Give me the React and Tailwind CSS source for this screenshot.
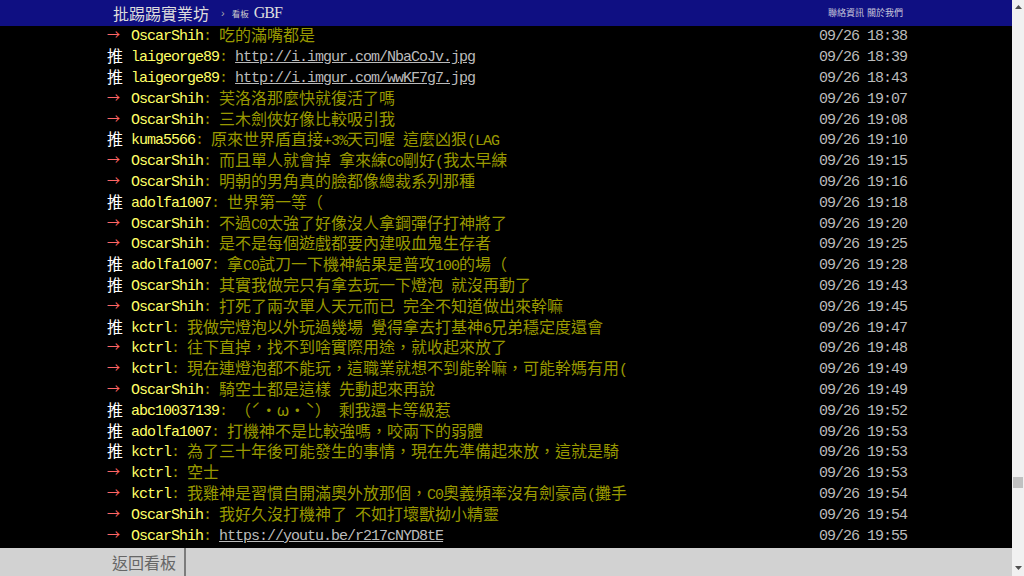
import React from 'react';

const pushes = [
    ['→', 'OscarShih', '吃的滿嘴都是', '09/26 18:38'],
    ['推', 'laigeorge89', 'http://i.imgur.com/NbaCoJv.jpg', '09/26 18:39'],
    ['推', 'laigeorge89', 'http://i.imgur.com/wwKF7g7.jpg', '09/26 18:43'],
    ['→', 'OscarShih', '芙洛洛那麼快就復活了嗎', '09/26 19:07'],
    ['→', 'OscarShih', '三木劍俠好像比較吸引我', '09/26 19:08'],
    ['推', 'kuma5566', '原來世界盾直接+3%天司喔 這麼凶狠(LAG', '09/26 19:10'],
    ['→', 'OscarShih', '而且單人就會掉 拿來練C0剛好(我太早練', '09/26 19:15'],
    ['→', 'OscarShih', '明朝的男角真的臉都像總裁系列那種', '09/26 19:16'],
    ['推', 'adolfa1007', '世界第一等（', '09/26 19:18'],
    ['→', 'OscarShih', '不過C0太強了好像沒人拿鋼彈仔打神將了', '09/26 19:20'],
    ['→', 'OscarShih', '是不是每個遊戲都要內建吸血鬼生存者', '09/26 19:25'],
    ['推', 'adolfa1007', '拿C0試刀一下機神結果是普攻100的場（', '09/26 19:28'],
    ['推', 'OscarShih', '其實我做完只有拿去玩一下燈泡 就沒再動了', '09/26 19:43'],
    ['→', 'OscarShih', '打死了兩次單人天元而已 完全不知道做出來幹嘛', '09/26 19:45'],
    ['推', 'kctrl', '我做完燈泡以外玩過幾場 覺得拿去打基神6兄弟穩定度還會', '09/26 19:47'],
    ['→', 'kctrl', '往下直掉，找不到啥實際用途，就收起來放了', '09/26 19:48'],
    ['→', 'kctrl', '現在連燈泡都不能玩，這職業就想不到能幹嘛，可能幹媽有用(', '09/26 19:49'],
    ['→', 'OscarShih', '騎空士都是這樣 先動起來再說', '09/26 19:49'],
    ['推', 'abc10037139', '（ˊ・ω・ˋ） 剩我還卡等級惹', '09/26 19:52'],
    ['推', 'adolfa1007', '打機神不是比較強嗎，咬兩下的弱體', '09/26 19:53'],
    ['推', 'kctrl', '為了三十年後可能發生的事情，現在先準備起來放，這就是騎', '09/26 19:53'],
    ['→', 'kctrl', '空士', '09/26 19:53'],
    ['→', 'kctrl', '我雞神是習慣自開滿奧外放那個，C0奧義頻率沒有劍豪高(攤手', '09/26 19:54'],
    ['→', 'OscarShih', '我好久沒打機神了 不如打壞獸拗小精靈', '09/26 19:54'],
    ['→', 'OscarShih', 'https://youtu.be/r217cNYD8tE', '09/26 19:55'],
];

// half-width runs get 8px cells, everything else 16px cells
function Seg({ text }) {
    return text.match(/[\x00-\x7f]+|[^\x00-\x7f]+/g).map((s, i) =>
        /^[\x00-\x7f]/.test(s) ? (
            <span key={i} className="font-['Liberation_Mono'] text-[15px] tracking-[-1px]">
                {s}
            </span>
        ) : (
            <span key={i} className="font-['Noto_Sans_CJK_TC'] text-[16px]">
                {s}
            </span>
        )
    );
}

function Push({ tag, user, content, time }) {
    const isLink = content.startsWith('http');
    return (
        <div className="flex h-[20.8px] leading-[20.8px] whitespace-pre">
            {tag === '推' ? (
                <span className="inline-block w-[24px] font-['Noto_Sans_CJK_TC'] text-[16px] text-white">推</span>
            ) : (
                <span className="inline-block w-[24px] font-['Noto_Sans_CJK_TC'] text-[13px] text-[#f66]">→</span>
            )}
            <span className="text-[#ff6]">
                <Seg text={user} />
            </span>
            <span className="text-[#990]">
                <Seg text=": " />
            </span>
            {isLink ? (
                <span className="text-[#bbb] underline">
                    <Seg text={content} />
                </span>
            ) : (
                <span className="text-[#990]">
                    <Seg text={content} />
                </span>
            )}
            <span className="ml-auto text-[#bbb]">
                <Seg text={time} />
            </span>
        </div>
    );
}

export default function App() {
    return (
        <div className="flex h-[576px] w-[1024px] overflow-hidden bg-black">
            <div className="flex w-[1012px] flex-col">
                <div className="relative z-10 flex h-[26px] shrink-0 items-center bg-[#0f0f82] pl-[113px] pr-[109px]">
                    <span className="font-['Noto_Sans_CJK_TC'] text-[16px] leading-none text-[#ddd]">批踢踢實業坊</span>
                    <span className="ml-[12px] font-['Liberation_Sans'] text-[11px] text-[#aaa]">›</span>
                    <span className="ml-[7px] font-['Noto_Sans_CJK_TC'] text-[8.5px] text-[#ccc]">看板</span>
                    <span className="ml-[5px] font-['Liberation_Serif'] text-[16px] tracking-[-1px] text-[#ddd]">GBF</span>
                    <div className="ml-auto flex gap-[3px] font-['Noto_Sans_CJK_TC'] text-[9px] text-[#c8c8dc]">
                        <span>聯絡資訊</span>
                        <span>關於我們</span>
                    </div>
                </div>
                <div className="flex-1 overflow-hidden bg-black">
                    <div className="ml-[107px] mt-[-1.6px] w-[800px]">
                        {pushes.map(([tag, user, content, time], i) => (
                            <Push key={i} tag={tag} user={user} content={content} time={time} />
                        ))}
                    </div>
                </div>
                <div className="flex h-[28px] shrink-0 bg-[#d2d2d2]">
                    <div className="flex w-[186px] items-center justify-end border-r-2 border-[#7c7c7c] pr-[8px] font-['Noto_Sans_CJK_TC'] text-[16px] text-[#666]">
                        返回看板
                    </div>
                </div>
            </div>
            <div className="relative flex w-[12px] flex-col items-center bg-[#f1f1f1]">
                <svg width="7" height="4" viewBox="0 0 7 4" className="mt-[5px]">
                    <path d="M3.5 0 L7 4 L0 4 Z" fill="#505050" />
                </svg>
                <div className="absolute left-[1px] top-[477px] h-[11px] w-[10px] bg-[#c1c1c1]" />
                <svg width="7" height="4" viewBox="0 0 7 4" className="mt-auto mb-[6px]">
                    <path d="M0 0 L7 0 L3.5 4 Z" fill="#505050" />
                </svg>
            </div>
        </div>
    );
}
